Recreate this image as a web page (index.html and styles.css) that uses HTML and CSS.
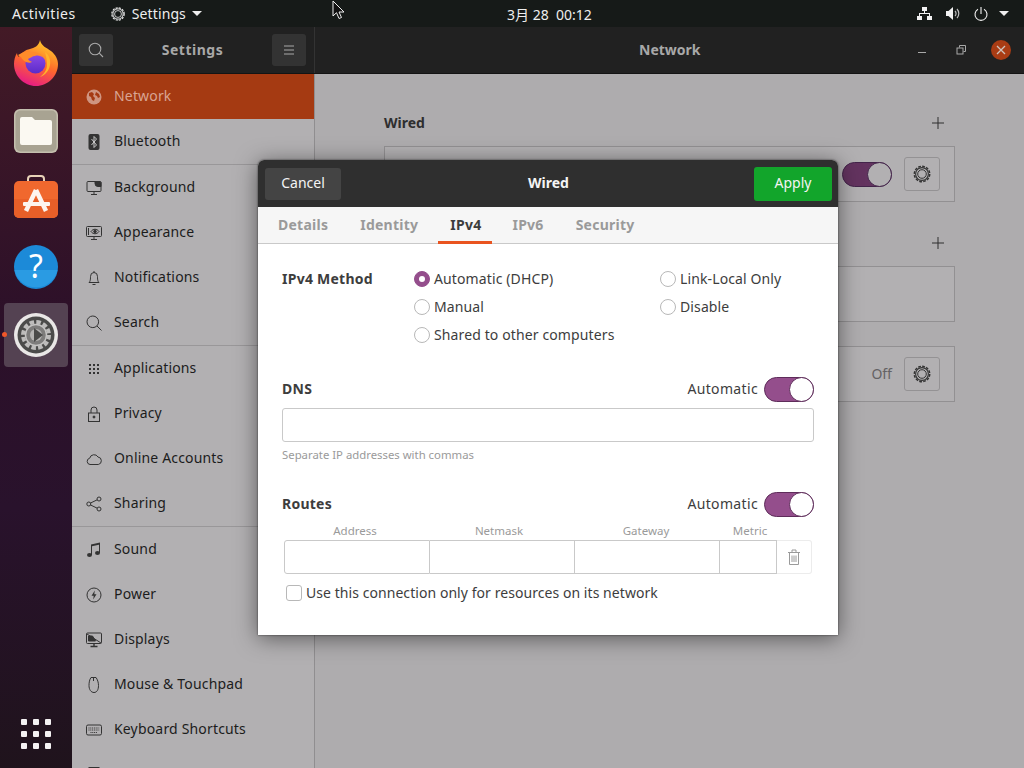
FILE: index.html
```html
<!DOCTYPE html>
<html lang="zh-CN">
<head>
    <meta charset="UTF-8">
    <meta name="viewport" content="width=device-width, initial-scale=1.0">
    <title>Settings - Network</title>
    <link rel="stylesheet" href="styles.css">
</head>
<body>

<svg class="defs" width="0" height="0">
    <symbol id="gear" viewBox="0 0 20 20">
        <circle cx="10" cy="10" r="7.7" fill="none" stroke="currentColor" stroke-width="1.500" stroke-dasharray="2.700 1.330"/>
        <circle cx="10" cy="10" r="6.400" fill="none" stroke="currentColor" stroke-width="1.100"/>
        <circle cx="10" cy="10" r="4.300" fill="none" stroke="currentColor" stroke-width="1"/>
    </symbol>
</svg>

<div class="screen">

    <header class="topbar">
        <span class="top-item activities">Activities</span>
        <span class="top-item app-menu">
            <svg class="top-gear"><use href="#gear"/></svg>
            <span class="app-name">Settings</span>
            <span class="caret"></span>
        </span>
        <span class="clock">3月 28&nbsp; 00:12</span>
        <div class="tray">
            <svg class="tray-net" width="15" height="13" viewBox="0 0 15 13" fill="#f2f2f2">
                <rect x="5" y="0" width="5" height="4"/>
                <rect x="0" y="9" width="5" height="4"/>
                <rect x="10" y="9" width="5" height="4"/>
                <path d="M7 4h1v2h5v3h-1V7H3v2H2V6h5z"/>
            </svg>
            <svg class="tray-vol" width="14" height="13" viewBox="0 0 14 13">
                <path d="M0 4h2.500L7 0v13L2.500 9H0z" fill="#f2f2f2"/>
                <path d="M9 4a3.500 3.500 0 0 1 0 5M11 2a6.500 6.500 0 0 1 0 9" fill="none" stroke="#bdbdbd" stroke-width="1.200"/>
            </svg>
            <svg class="tray-power" width="14" height="14" viewBox="0 0 14 14" fill="none" stroke="#f2f2f2" stroke-width="1.100">
                <path d="M4 2.200a6 6 0 1 0 6 0M7 0v7"/>
            </svg>
            <span class="caret tray-caret"></span>
        </div>
    </header>

    <div class="desktop">

        <nav class="dock">
            <div class="dock-item">
                <svg width="48" height="48" viewBox="0 0 48 48">
                    <defs>
                        <linearGradient id="fxBody" x1="0.7" y1="0" x2="0.3" y2="1">
                            <stop offset="0" stop-color="#ffd02a"/>
                            <stop offset="0.5" stop-color="#ff6a2b"/>
                            <stop offset="1" stop-color="#e5178a"/>
                        </linearGradient>
                        <linearGradient id="fxCore" x1="0.5" y1="0" x2="0.5" y2="1">
                            <stop offset="0" stop-color="#8d4be8"/>
                            <stop offset="1" stop-color="#5b2bc9"/>
                        </linearGradient>
                    </defs>
                    <path d="M28 1c1 6 7 8 11 11 5 4 7 9 7 13 0 12-10 22-22 22S2 37 2 25c0-4 1-8 3-11 0 2 1 3 2 4 2-4 6-7 11-8 4-1 9-3 10-9z" fill="url(#fxBody)"/>
                    <circle cx="23.500" cy="24.500" r="10" fill="url(#fxCore)"/>
                    <path d="M6 16c4-3 9-4 13-3 5 0 10 1 13 6-3-2-6-3-9-2-3 0-4 2-7 3 1 2 3 2 4 3-4 2-9-1-11-5-1 0-2-1-3-2z" fill="#ff8c2a"/>
                    <path d="M33 13c4 3 6 8 5 13-1 6-5 10-10 12 4-3 7-7 7-12 0-5-1-9-2-13z" fill="#ffb52a"/>
                </svg>
            </div>
            <div class="dock-item">
                <svg width="44" height="44" viewBox="0 0 44 44">
                    <rect x="0" y="0" width="44" height="44" rx="6" fill="#c4bfae"/>
                    <rect x="1.500" y="1.500" width="41" height="41" rx="5" fill="#a8a392"/>
                    <path d="M6 10a2 2 0 0 1 2-2h10l3 3h15a2 2 0 0 1 2 2v21a2 2 0 0 1-2 2H8a2 2 0 0 1-2-2z" fill="#fbf9f2"/>
                </svg>
            </div>
            <div class="dock-item store">
                <svg width="44" height="44" viewBox="0 0 44 44">
                    <path d="M14 7V4a3 3 0 0 1 3-3h10a3 3 0 0 1 3 3v3" fill="none" stroke="#e8d3b8" stroke-width="2"/>
                    <rect x="0" y="6" width="44" height="37" rx="5" fill="#f0682e"/>
                    <path d="M0 24h44v14a5 5 0 0 1-5 5H5a5 5 0 0 1-5-5z" fill="#e85f28"/>
                    <path d="M22 15L12 36M22 15l10 21" fill="none" stroke="#fdf4ee" stroke-width="4.500"/>
                    <rect x="9" y="27" width="27" height="4" rx="1" fill="#fdf4ee"/>
                </svg>
            </div>
            <div class="dock-item">
                <svg width="44" height="44" viewBox="0 0 44 44">
                    <circle cx="22" cy="22" r="22" fill="#1c8ad8"/>
                    <path d="M0.500 25a22 22 0 0 0 43 0z" fill="#2a9be3"/>
                    <text x="22" y="33" class="help-mark">?</text>
                </svg>
            </div>
            <div class="dock-item active">
                <span class="run-dot"></span>
                <svg width="44" height="44" viewBox="0 0 44 44">
                    <circle cx="22" cy="22" r="22" fill="#e9e7e6"/>
                    <circle cx="22" cy="22" r="18.500" fill="#4b4b4a"/>
                    <circle cx="22" cy="22" r="13" fill="none" stroke="#bdbcbb" stroke-width="4" stroke-dasharray="4.500 2.300"/>
                    <circle cx="22" cy="22" r="10.500" fill="#7d7c7b" stroke="#c4c3c2" stroke-width="1.500"/>
                    <circle cx="22" cy="22" r="6" fill="#b5b4b3"/>
                    <path d="M20 15l9 7-9 7z" fill="#4b4b4a"/>
                </svg>
            </div>
            <div class="show-apps">
                <i></i><i></i><i></i><i></i><i></i><i></i><i></i><i></i><i></i>
            </div>
        </nav>

        <div class="window">
            <div class="titlebar">
                <div class="side-head">
                    <span class="head-btn">
                        <svg width="16" height="16" viewBox="0 0 16 16" fill="none" stroke="#a9a9a9" stroke-width="1.100"><circle cx="7" cy="7" r="5.800"/><path d="M11.200 11.200l3.800 3.800"/></svg>
                    </span>
                    <span class="side-title">Settings</span>
                    <span class="head-btn">
                        <svg width="12" height="10" viewBox="0 0 12 10" stroke="#a9a9a9" stroke-width="1"><path d="M1 1h10M1 5h10M1 9h10"/></svg>
                    </span>
                </div>
                <div class="main-head">
                    <span class="main-title">Network</span>
                    <div class="win-btns">
                        <svg width="10" height="10" viewBox="0 0 10 10"><path d="M1 7.500h8" stroke="#a9a9a9"/></svg>
                        <svg width="10" height="10" viewBox="0 0 10 10" fill="none" stroke="#a9a9a9"><path d="M3.500 2.500v-2h6v6h-2"/><rect x="1" y="3" width="6" height="6"/></svg>
                        <span class="win-close">
                            <svg width="10" height="10" viewBox="0 0 10 10" stroke="#cfc4bd" stroke-width="1.300"><path d="M1 1l8 8M9 1l-8 8"/></svg>
                        </span>
                    </div>
                </div>
            </div>

            <div class="win-body">
                <aside class="sidebar">
                    <a class="row selected">
                        <svg class="ico" viewBox="0 0 16 16"><circle cx="8" cy="8" r="7.500" fill="#cf9580"/><path d="M3 4l3-1 2 2-1 2 2 2-1 3-2-1-1-3-2-1zM10 3l3 2 1 3-2 1-1-2-2-1z" fill="#a53a12"/></svg>
                        Network
                    </a>
                    <a class="row">
                        <svg class="ico" viewBox="0 0 16 16"><rect x="2.500" y="0" width="11" height="16" rx="2" fill="#333"/><path d="M5.500 5l5 6-2.500 2.500v-11L10.500 5l-5 6" fill="none" stroke="#d8d8d8" stroke-width="0.900"/></svg>
                        Bluetooth
                    </a>
                    <div class="sep"></div>
                    <a class="row">
                        <svg class="ico" viewBox="0 0 16 16" fill="none" stroke="#333"><path d="M4 11.500H2a1 1 0 0 1-1-1v-8a1 1 0 0 1 1-1h12a1 1 0 0 1 1 1v8a1 1 0 0 1-1 1z"/><path d="M9 1.500h5l1 1v4H12a3 3 0 0 1-3-3z" fill="#333"/><path d="M8 12v2M5 14.500h6"/></svg>
                        Background
                    </a>
                    <a class="row">
                        <svg class="ico" viewBox="0 0 16 16" fill="none" stroke="#333"><rect x="0.500" y="1.500" width="15" height="10" rx="1"/><path d="M2.500 3v7M5 6.500c2-3 6-3 8 0-2 3-6 3-8 0z"/><circle cx="9" cy="6.500" r="1.300" fill="#333"/><path d="M8 12v2M5 14.500h6"/></svg>
                        Appearance
                    </a>
                    <a class="row">
                        <svg class="ico" viewBox="0 0 16 16" fill="none" stroke="#333"><path d="M3 12.500h10c-1-1-1.500-2-1.500-6a3.500 4 0 0 0-7 0c0 4-.5 5-1.500 6zM8 1v1.500M6.500 14.500h3"/></svg>
                        Notifications
                    </a>
                    <a class="row">
                        <svg class="ico" viewBox="0 0 16 16" fill="none" stroke="#333"><circle cx="6.800" cy="6.800" r="5.800"/><path d="M11 11l4.500 4.500"/></svg>
                        Search
                    </a>
                    <div class="sep"></div>
                    <a class="row">
                        <svg class="ico" viewBox="0 0 16 16" fill="#333"><rect x="3" y="3" width="2" height="2"/><rect x="7" y="3" width="2" height="2"/><rect x="11" y="3" width="2" height="2"/><rect x="3" y="7" width="2" height="2"/><rect x="7" y="7" width="2" height="2"/><rect x="11" y="7" width="2" height="2"/><rect x="3" y="11" width="2" height="2"/><rect x="7" y="11" width="2" height="2"/><rect x="11" y="11" width="2" height="2"/></svg>
                        Applications
                    </a>
                    <a class="row">
                        <svg class="ico" viewBox="0 0 16 16" fill="none" stroke="#333"><rect x="2.500" y="7" width="11" height="8.500"/><path d="M5 7V4a3 3 0 0 1 6 0v3"/><circle cx="8" cy="11" r="1" fill="#333"/></svg>
                        Privacy
                    </a>
                    <a class="row">
                        <svg class="ico" viewBox="0 0 16 16" fill="none" stroke="#333"><path d="M4 13.500a3.200 3.200 0 0 1-.3-6.300A4.500 4.500 0 0 1 12 6a3.800 3.800 0 0 1 .3 7.500z"/></svg>
                        Online Accounts
                    </a>
                    <a class="row">
                        <svg class="ico" viewBox="0 0 16 16" fill="none" stroke="#333"><circle cx="2.800" cy="8" r="2"/><circle cx="13" cy="3" r="2"/><circle cx="13" cy="13" r="2"/><path d="M4.600 7l6.600-3.200M4.600 9l6.600 3.200"/></svg>
                        Sharing
                    </a>
                    <div class="sep"></div>
                    <a class="row">
                        <svg class="ico" viewBox="0 0 16 16" fill="#333"><path d="M5 2.500L14 .500v2L6 4.300zM5 2.500h1V13H5zM13 .700h1V11h-1z"/><ellipse cx="3.500" cy="13" rx="2.500" ry="2"/><ellipse cx="11.500" cy="11" rx="2.500" ry="2"/></svg>
                        Sound
                    </a>
                    <a class="row">
                        <svg class="ico" viewBox="0 0 16 16"><circle cx="8" cy="8" r="7" fill="none" stroke="#333"/><path d="M8.800 3.500L5.500 8.800h2.200l-.5 3.700 3.300-5.300H8.300z" fill="#333"/></svg>
                        Power
                    </a>
                    <a class="row">
                        <svg class="ico" viewBox="0 0 16 16" fill="none" stroke="#333"><rect x="0.500" y="1" width="15" height="10.500" rx="1"/><path d="M1 2l14 9" /><path d="M2.500 4h4l3 5h-7z" fill="#333"/><path d="M8 12v2M4.500 14.500h7" stroke-width="1.400"/></svg>
                        Displays
                    </a>
                    <a class="row">
                        <svg class="ico" viewBox="0 0 16 16" fill="none" stroke="#333"><path d="M5 .500h5c1.500 2 2.500 5 2.500 8 0 4-1.500 7-4.500 7s-5-3-5-7c0-3 .5-6 2-8zM7.500 1v3"/></svg>
                        Mouse &amp; Touchpad
                    </a>
                    <a class="row">
                        <svg class="ico" viewBox="0 0 16 16" fill="none" stroke="#333"><rect x="0.500" y="3" width="15" height="10" rx="1.500"/><path d="M2.500 6h11M2.500 8h11M4.500 10.500h7" stroke-dasharray="1 .8"/></svg>
                        Keyboard Shortcuts
                    </a>
                    <a class="row">
                        <svg class="ico" viewBox="0 0 16 16" fill="none" stroke="#333"><rect x="3" y="0.500" width="10" height="15"/></svg>
                    </a>
                </aside>

                <section class="panel">
                    <div class="net-head first">
                        <span class="net-label">Wired</span>
                        <svg class="plus" width="12" height="12" viewBox="0 0 12 12" stroke="#2e2e2e"><path d="M6 0v12M0 6h12"/></svg>
                    </div>
                    <div class="card">
                        <span class="toggle dim"><i></i></span>
                        <span class="gear-btn"><svg width="20" height="20"><use href="#gear"/></svg></span>
                    </div>
                    <div class="net-head second">
                        <span class="net-label"></span>
                        <svg class="plus" width="12" height="12" viewBox="0 0 12 12" stroke="#2e2e2e"><path d="M6 0v12M0 6h12"/></svg>
                    </div>
                    <div class="card"></div>
                    <div class="card third">
                        <span class="off">Off</span>
                        <span class="gear-btn"><svg width="20" height="20"><use href="#gear"/></svg></span>
                    </div>
                </section>
            </div>
        </div>
    </div>

    <div class="dialog">
        <div class="dlg-head">
            <button class="btn cancel">Cancel</button>
            <span class="dlg-title">Wired</span>
            <button class="btn apply">Apply</button>
        </div>

        <div class="tabs">
            <span class="tab">Details</span>
            <span class="tab">Identity</span>
            <span class="tab current">IPv4</span>
            <span class="tab">IPv6</span>
            <span class="tab">Security</span>
        </div>

        <div class="dlg-body">
            <div class="method">
                <span class="heading">IPv4 Method</span>
                <label class="opt"><span class="radio on"></span><span class="opt-text">Automatic (DHCP)</span></label>
                <label class="opt"><span class="radio"></span><span class="opt-text">Link-Local Only</span></label>
                <label class="opt col2"><span class="radio"></span><span class="opt-text">Manual</span></label>
                <label class="opt"><span class="radio"></span><span class="opt-text">Disable</span></label>
                <label class="opt col2 wide"><span class="radio"></span><span class="opt-text">Shared to other computers</span></label>
            </div>

            <div class="line dns">
                <span class="heading">DNS</span>
                <span class="auto"><span class="opt-text">Automatic</span><span class="toggle"><i></i></span></span>
            </div>
            <div class="field"></div>
            <p class="hint">Separate IP addresses with commas</p>

            <div class="line routes">
                <span class="heading">Routes</span>
                <span class="auto"><span class="opt-text">Automatic</span><span class="toggle"><i></i></span></span>
            </div>
            <div class="route-labels">
                <span>Address</span>
                <span>Netmask</span>
                <span>Gateway</span>
                <span>Metric</span>
            </div>
            <div class="route-row">
                <span class="cell"></span>
                <span class="cell"></span>
                <span class="cell"></span>
                <span class="cell"></span>
                <span class="trash">
                    <svg width="14" height="16" viewBox="0 0 14 16" fill="none" stroke="#9a9a9a"><path d="M1 3.500h12M5 3V1h4v2M2.500 4v11.500h9V4M5 6.500v6.500M7 6.500v6.500M9 6.500v6.500"/></svg>
                </span>
            </div>
            <label class="check-line"><span class="check"></span><span class="opt-text">Use this connection only for resources on its network</span></label>
        </div>
    </div>

    <svg class="cursor" width="14" height="20" viewBox="0 0 14 20">
        <path d="M1 1v15l3.500-3.300L7 18.500l2.500-1-2.500-5.500h5z" fill="#111" stroke="#eee" stroke-width="1"/>
    </svg>
</div>

</body>
</html>
```

FILE: styles.css
```css
* {
    box-sizing: border-box;
}
body {
    margin: 0;
    font-family: "Noto Sans", sans-serif;
    font-size: 14px;
    color: #3d3d3d;
}
.defs {
    position: absolute;
}
.screen {
    position: relative;
    width: 1024px;
    height: 768px;
    overflow: hidden;
    display: flex;
    flex-direction: column;
}

/* top bar */
.topbar {
    height: 27px;
    flex: none;
    background: #161a18;
    color: #eeeeee;
    display: flex;
    align-items: center;
    position: relative;
}
.activities {
    margin-left: 12px;
    letter-spacing: 0.55px;
}
.app-menu {
    margin-left: 34px;
    display: flex;
    align-items: center;
    gap: 6px;
}
.app-name {
    letter-spacing: 0.1px;
}
.top-gear {
    width: 16px;
    height: 16px;
    color: #eeeeee;
}
.caret {
    width: 0;
    height: 0;
    border-left: 5px solid transparent;
    border-right: 5px solid transparent;
    border-top: 5px solid #eeeeee;
}
.clock {
    position: absolute;
    left: 507px;
    font-size: 14px;
}
.tray {
    margin-left: auto;
    display: flex;
    align-items: center;
    margin-right: 15px;
}
.tray-vol {
    margin-left: 14px;
}
.tray-power {
    margin-left: 14px;
}
.tray-caret {
    margin-left: 11px;
}

/* dock */
.desktop {
    flex: 1;
    display: flex;
    min-height: 0;
}
.dock {
    width: 72px;
    flex: none;
    background: linear-gradient(180deg, #431a26 0, #2c1029 40%, #29122c 65%, #1f131c 100%);
    display: flex;
    flex-direction: column;
    align-items: center;
    padding-top: 4px;
}
.dock-item {
    width: 64px;
    height: 64px;
    margin-bottom: 4px;
    display: flex;
    align-items: center;
    justify-content: center;
    border-radius: 4px;
    position: relative;
}
.dock-item.store svg {
    margin-top: -4px;
}
.dock-item.active {
    background: #544252;
}
.run-dot {
    position: absolute;
    left: -2px;
    top: 29px;
    width: 5px;
    height: 5px;
    border-radius: 50%;
    background: #f0572a;
}
.help-mark {
    font-family: "Noto Sans", sans-serif;
    font-size: 32px;
    fill: #ffffff;
    text-anchor: middle;
}
.show-apps {
    margin-top: auto;
    margin-bottom: 19px;
    display: grid;
    grid-template-columns: repeat(3, 6px);
    gap: 6px;
}
.show-apps i {
    width: 6px;
    height: 6px;
    background: #f4f2f3;
    border-radius: 1px;
}

/* settings window, dimmed behind the dialog */
.window {
    flex: 1;
    display: flex;
    flex-direction: column;
    min-width: 0;
}
.titlebar {
    height: 47px;
    flex: none;
    display: flex;
    background: #212121;
    border-bottom: 1px solid #141414;
    font-weight: 700;
    color: #a8a8a8;
}
.side-head {
    width: 243px;
    flex: none;
    border-right: 1px solid #333333;
    display: flex;
    align-items: center;
    justify-content: space-between;
    padding: 0 8px 0 7px;
}
.side-title {
    letter-spacing: 0.5px;
    padding-bottom: 2px;
}
.head-btn {
    width: 34px;
    height: 32px;
    background: #333333;
    border-radius: 3px;
    display: flex;
    align-items: center;
    justify-content: center;
}
.main-head {
    flex: 1;
    position: relative;
    display: flex;
    align-items: center;
}
.main-title {
    position: absolute;
    left: 324px;
    padding-bottom: 2px;
}
.win-btns {
    margin-left: auto;
    display: flex;
    align-items: center;
    gap: 29px;
    margin-right: 13px;
}
.win-close {
    width: 20px;
    height: 20px;
    border-radius: 50%;
    background: #a93c14;
    display: flex;
    align-items: center;
    justify-content: center;
    margin-left: -4px;
}
.win-body {
    flex: 1;
    display: flex;
    min-height: 0;
}
.sidebar {
    width: 243px;
    flex: none;
    background: #b2b0b2;
    border-right: 1px solid #908e90;
    overflow: hidden;
}
.row {
    height: 45px;
    display: flex;
    align-items: center;
    gap: 12px;
    padding: 0 0 2px 14px;
    color: #1c1c1c;
    letter-spacing: 0.17px;
}
.row.selected {
    background: #a53a12;
    color: #d9a593;
}
.ico {
    width: 16px;
    height: 16px;
    flex: none;
    margin-top: 2px;
}
.sep {
    height: 1px;
    background: #999799;
}
.panel {
    flex: 1;
    background: #aeacae;
    padding: 39px 69px 0 69px;
}
.net-head {
    height: 20px;
    display: flex;
    align-items: center;
    justify-content: space-between;
    padding-right: 11px;
}
.net-head.first {
    margin-bottom: 13px;
}
.net-head.second {
    margin-top: 31px;
    margin-bottom: 13px;
}
.net-label {
    font-weight: 700;
    color: #2e2e2e;
    padding-bottom: 2px;
}
.card {
    height: 56px;
    border: 1px solid #929092;
    background: #b2b0b2;
    display: flex;
    align-items: center;
    justify-content: flex-end;
    padding-right: 14px;
    gap: 12px;
}
.card.third {
    margin-top: 24px;
}
.off {
    color: #646264;
    padding-bottom: 2px;
}
.gear-btn {
    width: 36px;
    height: 34px;
    border: 1px solid #949294;
    border-radius: 3px;
    display: flex;
    align-items: center;
    justify-content: center;
    color: #333333;
}

/* switches */
.toggle {
    display: inline-flex;
    justify-content: flex-end;
    width: 50px;
    height: 25px;
    border-radius: 13px;
    background: #944e8c;
    border: 1px solid #5e2c5a;
}
.toggle i {
    width: 25px;
    height: 25px;
    margin: -1px;
    border-radius: 50%;
    background: #ffffff;
    border: 1px solid #5e2c5a;
}
.toggle.dim {
    background: #63335f;
    border-color: #43244a;
}
.toggle.dim i {
    background: #b2b0b2;
    border-color: #43244a;
}

/* dialog */
.dialog {
    position: absolute;
    left: 258px;
    top: 160px;
    width: 580px;
    height: 475px;
    background: #ffffff;
    border-radius: 6px 6px 0 0;
    box-shadow: 0 3px 22px rgba(0, 0, 0, 0.5), 0 0 2px rgba(0, 0, 0, 0.7);
    display: flex;
    flex-direction: column;
}
.dlg-head {
    height: 47px;
    flex: none;
    background: #2f2f2f;
    border-radius: 6px 6px 0 0;
    display: grid;
    grid-template-columns: 1fr auto 1fr;
    align-items: center;
    padding: 0 6px 0 7px;
}
.btn {
    font: inherit;
    border: none;
    border-radius: 3px;
    color: #f4f4f4;
    padding: 0 0 3px;
}
.cancel {
    width: 76px;
    height: 32px;
    background: #444444;
    justify-self: start;
}
.apply {
    width: 78px;
    height: 34px;
    background: #12a52b;
    justify-self: end;
}
.dlg-title {
    color: #f4f4f4;
    font-weight: 700;
    padding-bottom: 2px;
}
.tabs {
    height: 37px;
    flex: none;
    background: #f6f6f6;
    border-bottom: 1px solid #c9c9c9;
    display: flex;
    padding-left: 8px;
    gap: 8px;
}
.tab {
    padding: 0 12px;
    line-height: 35px;
    font-weight: 700;
    color: #9a9a9a;
    height: 37px;
    letter-spacing: 0.25px;
}
.tab.current {
    color: #3d3d3d;
    padding-right: 11px;
    border-bottom: 3px solid #e95420;
}
.dlg-body {
    padding: 21px 24px 0;
}
.heading {
    font-weight: 700;
    color: #3d3d3d;
    letter-spacing: 0.25px;
    padding-bottom: 2px;
}
.method {
    display: grid;
    grid-template-columns: 132px 246px auto;
    grid-auto-rows: 28px;
    align-items: center;
}
.col2 {
    grid-column: 2;
}
.wide {
    grid-column: 2 / 4;
}
.opt {
    display: flex;
    align-items: center;
    gap: 4px;
}
.opt-text {
    padding-bottom: 2px;
    letter-spacing: 0.12px;
}
.radio {
    width: 16px;
    height: 16px;
    border-radius: 50%;
    border: 1px solid #b8b8b8;
    background: #ffffff;
    flex: none;
}
.radio.on {
    background: #944e8c;
    border-color: #944e8c;
    position: relative;
}
.radio.on::after {
    content: "";
    position: absolute;
    left: 4px;
    top: 4px;
    width: 6px;
    height: 6px;
    border-radius: 50%;
    background: #ffffff;
}
.line {
    height: 25px;
    display: flex;
    align-items: center;
    justify-content: space-between;
}
.dns {
    margin-top: 28px;
}
.routes {
    margin-top: 29px;
}
.auto {
    display: flex;
    align-items: center;
    gap: 6px;
}
.auto .opt-text {
    letter-spacing: 0.35px;
}
.field {
    height: 34px;
    margin-top: 6px;
    border: 1px solid #c9c9c9;
    border-radius: 3px;
}
.hint {
    margin: 5px 0 0;
    font-size: 11.35px;
    line-height: 16px;
    color: #9a9a9a;
}
.route-labels {
    margin: 7px 2px 0;
    display: grid;
    grid-template-columns: 142px 146px 148px 60px;
    font-size: 11.5px;
    line-height: 14px;
    color: #9a9a9a;
    text-align: center;
}
.route-row {
    margin: 2px 2px 0;
    height: 34px;
    display: grid;
    grid-template-columns: 146px 145px 145px 57px 35px;
}
.cell {
    border: 1px solid #c9c9c9;
    border-left: none;
}
.cell:first-child {
    border-left: 1px solid #c9c9c9;
    border-radius: 3px 0 0 3px;
}
.trash {
    border: 1px solid #ececec;
    border-left: none;
    border-radius: 0 3px 3px 0;
    display: flex;
    align-items: center;
    justify-content: center;
}
.check-line {
    margin: 8px 0 0 4px;
    height: 22px;
    display: flex;
    align-items: center;
    gap: 4px;
}
.check-line .opt-text {
    letter-spacing: 0.06px;
}
.check {
    width: 16px;
    height: 16px;
    border: 1px solid #b8b8b8;
    border-radius: 3px;
    flex: none;
}
.cursor {
    position: absolute;
    left: 332px;
    top: 0;
}
```
